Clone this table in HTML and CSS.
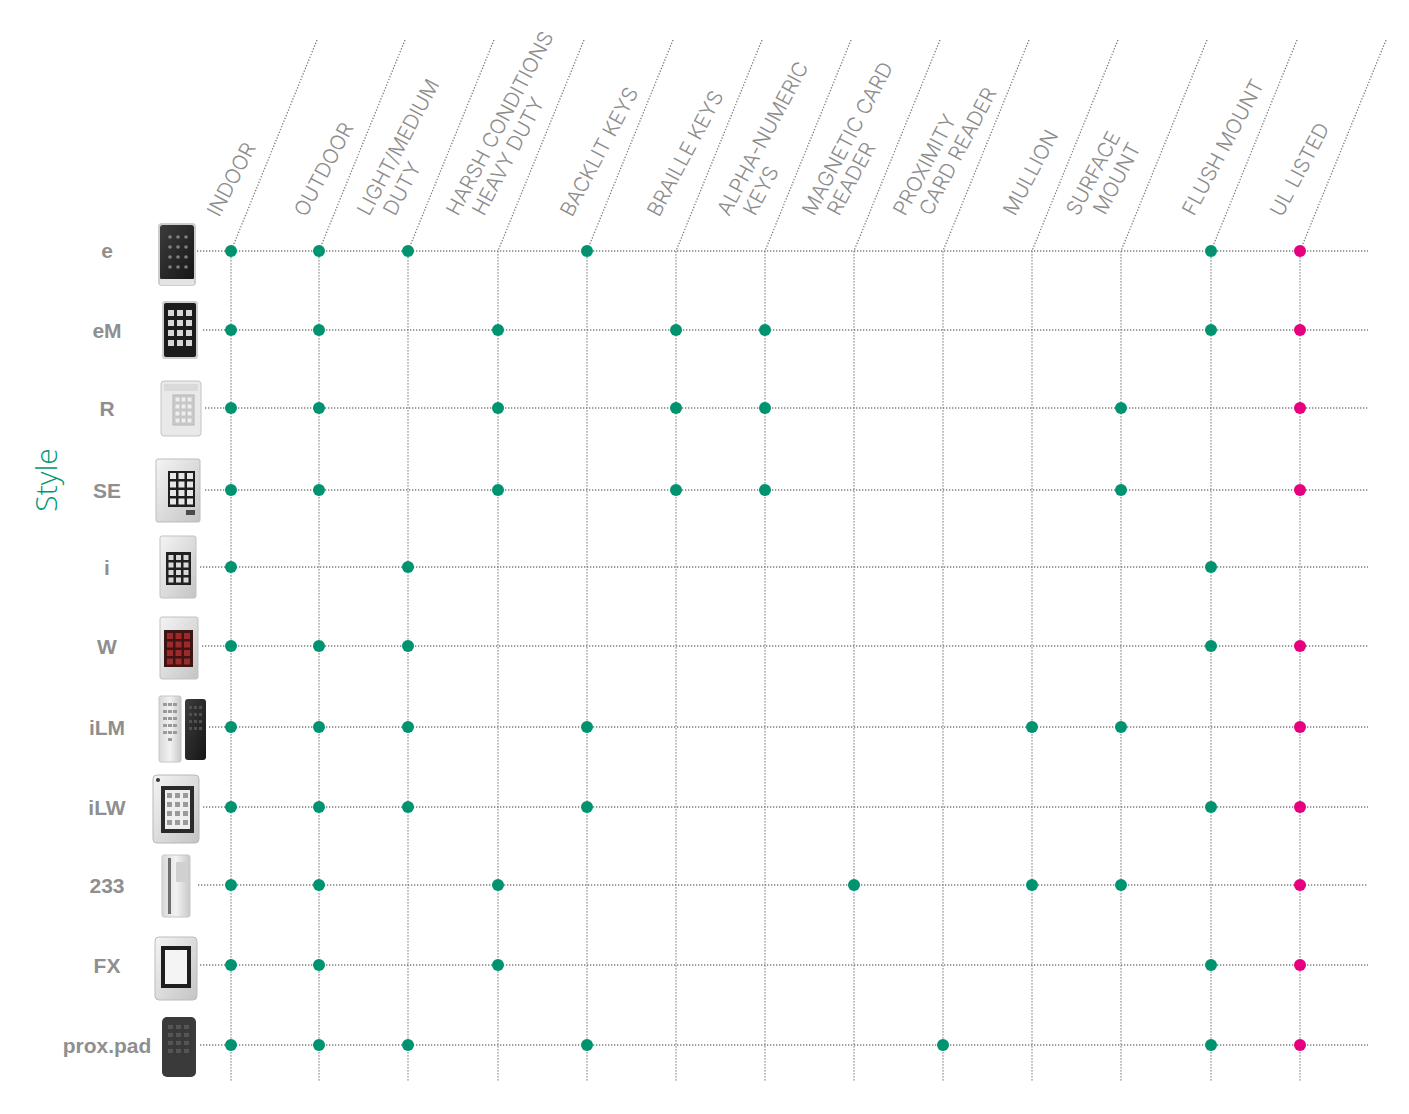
FILE: index.html
```html
<!DOCTYPE html>
<html lang="en">
<head>
<meta charset="utf-8">
<title>Keypad feature matrix</title>
<link rel="stylesheet" href="styles.css">
</head>
<body>
<main class="page">
<svg class="chart" width="1409" height="1114" viewBox="0 0 1409 1114" xmlns="http://www.w3.org/2000/svg">
  <defs>
    <linearGradient id="silver" x1="0" y1="0" x2="1" y2="1">
      <stop offset="0" stop-color="#f4f4f4"/>
      <stop offset="1" stop-color="#c4c4c4"/>
    </linearGradient>
    <linearGradient id="silverv" x1="0" y1="0" x2="1" y2="0">
      <stop offset="0" stop-color="#d8d8d8"/>
      <stop offset="0.5" stop-color="#f2f2f2"/>
      <stop offset="1" stop-color="#c8c8c8"/>
    </linearGradient>
    <linearGradient id="dark" x1="0" y1="0" x2="1" y2="1">
      <stop offset="0" stop-color="#3c3c3c"/>
      <stop offset="1" stop-color="#161616"/>
    </linearGradient>
  </defs>

  <!-- column guides: diagonal + vertical -->
  <g class="guides">
    <polyline points="317,40 231,251 231,1082"/>
    <polyline points="405,40 319,251 319,1082"/>
    <polyline points="494,40 408,251 408,1082"/>
    <polyline points="584,40 498,251 498,1082"/>
    <polyline points="673,40 587,251 587,1082"/>
    <polyline points="762,40 676,251 676,1082"/>
    <polyline points="851,40 765,251 765,1082"/>
    <polyline points="940,40 854,251 854,1082"/>
    <polyline points="1029,40 943,251 943,1082"/>
    <polyline points="1118,40 1032,251 1032,1082"/>
    <polyline points="1207,40 1121,251 1121,1082"/>
    <polyline points="1297,40 1211,251 1211,1082"/>
    <polyline points="1386,40 1300,251 1300,1082"/>
  </g>

  <!-- row guides -->
  <g class="guides">
    <line x1="197" y1="251" x2="1368" y2="251"/>
    <line x1="203" y1="330" x2="1368" y2="330"/>
    <line x1="205" y1="408" x2="1368" y2="408"/>
    <line x1="205" y1="490" x2="1368" y2="490"/>
    <line x1="200" y1="567" x2="1368" y2="567"/>
    <line x1="202" y1="646" x2="1368" y2="646"/>
    <line x1="209" y1="727" x2="1368" y2="727"/>
    <line x1="203" y1="807" x2="1368" y2="807"/>
    <line x1="198" y1="885" x2="1368" y2="885"/>
    <line x1="200" y1="965" x2="1368" y2="965"/>
    <line x1="200" y1="1045" x2="1368" y2="1045"/>
  </g>

  <!-- column headings -->
  <g class="heads">
    <text class="head" transform="translate(219,218) rotate(-62)">INDOOR</text>
    <text class="head" transform="translate(306,218) rotate(-62)">OUTDOOR</text>
    <text class="head" transform="translate(369,217) rotate(-62)">LIGHT/MEDIUM</text>
    <text class="head" transform="translate(395,217) rotate(-62)">DUTY</text>
    <text class="head" transform="translate(458,217) rotate(-62)">HARSH CONDITIONS</text>
    <text class="head" transform="translate(484,217) rotate(-62)">HEAVY DUTY</text>
    <text class="head" transform="translate(572,218) rotate(-62)">BACKLIT KEYS</text>
    <text class="head" transform="translate(659,218) rotate(-62)">BRAILLE KEYS</text>
    <text class="head" transform="translate(729,217) rotate(-62)">ALPHA-NUMERIC</text>
    <text class="head" transform="translate(755,217) rotate(-62)">KEYS</text>
    <text class="head" transform="translate(814,217) rotate(-62)">MAGNETIC CARD</text>
    <text class="head" transform="translate(839,217) rotate(-62)">READER</text>
    <text class="head" transform="translate(905,217) rotate(-62)">PROXIMITY</text>
    <text class="head" transform="translate(931,217) rotate(-62)">CARD READER</text>
    <text class="head" transform="translate(1015,217) rotate(-62)">MULLION</text>
    <text class="head" transform="translate(1078,217) rotate(-62)">SURFACE</text>
    <text class="head" transform="translate(1105,216) rotate(-62)">MOUNT</text>
    <text class="head" transform="translate(1194,217) rotate(-62)">FLUSH MOUNT</text>
    <text class="head" transform="translate(1282,218) rotate(-62)">UL LISTED</text>
  </g>

  <!-- axis title -->
  <text class="axis" transform="translate(57,480) rotate(-90)">Style</text>

  <!-- row labels -->
  <g class="rows">
    <text class="row-label" x="107" y="258">e</text>
    <text class="row-label" x="107" y="338">eM</text>
    <text class="row-label" x="107" y="416">R</text>
    <text class="row-label" x="107" y="498">SE</text>
    <text class="row-label" x="107" y="575">i</text>
    <text class="row-label" x="107" y="654">W</text>
    <text class="row-label" x="107" y="735">iLM</text>
    <text class="row-label" x="107" y="815">iLW</text>
    <text class="row-label" x="107" y="893">233</text>
    <text class="row-label" x="107" y="973">FX</text>
    <text class="row-label" x="107" y="1053">prox.pad</text>
  </g>

  <!-- product pictures -->
  <g class="products">
    <!-- e -->
    <g>
      <rect x="158" y="223" width="38" height="63" rx="4" fill="#cdcdcd"/>
      <rect x="160" y="225" width="34" height="55" rx="3" fill="url(#dark)"/>
      <rect x="160" y="279" width="34" height="6" rx="1" fill="#e4e4e4"/>
      <g fill="#808080">
        <circle cx="170" cy="237" r="1.8"/><circle cx="178" cy="237" r="1.8"/><circle cx="186" cy="237" r="1.8"/>
        <circle cx="170" cy="247" r="1.8"/><circle cx="178" cy="247" r="1.8"/><circle cx="186" cy="247" r="1.8"/>
        <circle cx="170" cy="257" r="1.8"/><circle cx="178" cy="257" r="1.8"/><circle cx="186" cy="257" r="1.8"/>
        <circle cx="170" cy="267" r="1.8"/><circle cx="178" cy="267" r="1.8"/><circle cx="186" cy="267" r="1.8"/>
      </g>
    </g>
    <!-- eM -->
    <g>
      <rect x="162" y="301" width="36" height="58" rx="3" fill="#cfcfcf"/>
      <rect x="164" y="303" width="32" height="54" rx="2" fill="#1c1c1c"/>
      <g fill="#d6d6d6">
        <rect x="168" y="310" width="6" height="6"/><rect x="177" y="310" width="6" height="6"/><rect x="186" y="310" width="6" height="6"/>
        <rect x="168" y="320" width="6" height="6"/><rect x="177" y="320" width="6" height="6"/><rect x="186" y="320" width="6" height="6"/>
        <rect x="168" y="330" width="6" height="6"/><rect x="177" y="330" width="6" height="6"/><rect x="186" y="330" width="6" height="6"/>
        <rect x="168" y="340" width="6" height="6"/><rect x="177" y="340" width="6" height="6"/><rect x="186" y="340" width="6" height="6"/>
      </g>
    </g>
    <!-- R -->
    <g>
      <rect x="161" y="381" width="40" height="55" rx="3" fill="#e9e9e9" stroke="#c4c4c4"/>
      <rect x="164" y="384" width="34" height="7" fill="#dadada"/>
      <rect x="173" y="395" width="21" height="30" fill="#d2d2d2" stroke="#b3b3b3"/>
      <g fill="#eeeeee" stroke="#b0b0b0" stroke-width="0.6">
        <rect x="175" y="397" width="5" height="5"/><rect x="181" y="397" width="5" height="5"/><rect x="187" y="397" width="5" height="5"/>
        <rect x="175" y="404" width="5" height="5"/><rect x="181" y="404" width="5" height="5"/><rect x="187" y="404" width="5" height="5"/>
        <rect x="175" y="411" width="5" height="5"/><rect x="181" y="411" width="5" height="5"/><rect x="187" y="411" width="5" height="5"/>
        <rect x="175" y="418" width="5" height="5"/><rect x="181" y="418" width="5" height="5"/><rect x="187" y="418" width="5" height="5"/>
      </g>
    </g>
    <!-- SE -->
    <g>
      <rect x="156" y="459" width="44" height="63" rx="2" fill="url(#silver)" stroke="#bdbdbd"/>
      <rect x="168" y="471" width="27" height="36" fill="#1e1e1e"/>
      <g fill="#e6e6e6">
        <rect x="170" y="473" width="6" height="6"/><rect x="178.5" y="473" width="6" height="6"/><rect x="187" y="473" width="6" height="6"/>
        <rect x="170" y="481.5" width="6" height="6"/><rect x="178.5" y="481.5" width="6" height="6"/><rect x="187" y="481.5" width="6" height="6"/>
        <rect x="170" y="490" width="6" height="6"/><rect x="178.5" y="490" width="6" height="6"/><rect x="187" y="490" width="6" height="6"/>
        <rect x="170" y="498.5" width="6" height="6"/><rect x="178.5" y="498.5" width="6" height="6"/><rect x="187" y="498.5" width="6" height="6"/>
      </g>
      <rect x="186" y="510" width="9" height="5" fill="#4a4a4a"/>
    </g>
    <!-- i -->
    <g>
      <rect x="160" y="536" width="36" height="62" rx="2" fill="url(#silver)" stroke="#c2c2c2"/>
      <rect x="166" y="552" width="25" height="33" fill="#202020"/>
      <g fill="#d9d9d9">
        <rect x="168.5" y="555" width="5" height="5"/><rect x="176" y="555" width="5" height="5"/><rect x="183.5" y="555" width="5" height="5"/>
        <rect x="168.5" y="562.5" width="5" height="5"/><rect x="176" y="562.5" width="5" height="5"/><rect x="183.5" y="562.5" width="5" height="5"/>
        <rect x="168.5" y="570" width="5" height="5"/><rect x="176" y="570" width="5" height="5"/><rect x="183.5" y="570" width="5" height="5"/>
        <rect x="168.5" y="577.5" width="5" height="5"/><rect x="176" y="577.5" width="5" height="5"/><rect x="183.5" y="577.5" width="5" height="5"/>
      </g>
    </g>
    <!-- W -->
    <g>
      <rect x="160" y="617" width="38" height="62" rx="2" fill="url(#silver)" stroke="#c2c2c2"/>
      <rect x="164" y="630" width="29" height="37" fill="#3e1414"/>
      <g fill="#9c2a2a">
        <rect x="167" y="633" width="6" height="6"/><rect x="175.5" y="633" width="6" height="6"/><rect x="184" y="633" width="6" height="6"/>
        <rect x="167" y="641.5" width="6" height="6"/><rect x="175.5" y="641.5" width="6" height="6"/><rect x="184" y="641.5" width="6" height="6"/>
        <rect x="167" y="650" width="6" height="6"/><rect x="175.5" y="650" width="6" height="6"/><rect x="184" y="650" width="6" height="6"/>
        <rect x="167" y="658.5" width="6" height="6"/><rect x="175.5" y="658.5" width="6" height="6"/><rect x="184" y="658.5" width="6" height="6"/>
      </g>
    </g>
    <!-- iLM -->
    <g>
      <rect x="159" y="696" width="22" height="66" rx="2" fill="url(#silverv)" stroke="#c6c6c6"/>
      <g fill="#9a9a9a">
        <rect x="163" y="703" width="4" height="3"/><rect x="168" y="703" width="4" height="3"/><rect x="173" y="703" width="4" height="3"/>
        <rect x="163" y="710" width="4" height="3"/><rect x="168" y="710" width="4" height="3"/><rect x="173" y="710" width="4" height="3"/>
        <rect x="163" y="717" width="4" height="3"/><rect x="168" y="717" width="4" height="3"/><rect x="173" y="717" width="4" height="3"/>
        <rect x="163" y="724" width="4" height="3"/><rect x="168" y="724" width="4" height="3"/><rect x="173" y="724" width="4" height="3"/>
        <rect x="163" y="731" width="4" height="3"/><rect x="168" y="731" width="4" height="3"/><rect x="173" y="731" width="4" height="3"/>
        <rect x="168" y="738" width="4" height="3"/>
      </g>
      <rect x="185" y="699" width="21" height="61" rx="3" fill="url(#dark)"/>
      <g fill="#505050">
        <rect x="189" y="706" width="3" height="3"/><rect x="194" y="706" width="3" height="3"/><rect x="199" y="706" width="3" height="3"/>
        <rect x="189" y="713" width="3" height="3"/><rect x="194" y="713" width="3" height="3"/><rect x="199" y="713" width="3" height="3"/>
        <rect x="189" y="720" width="3" height="3"/><rect x="194" y="720" width="3" height="3"/><rect x="199" y="720" width="3" height="3"/>
        <rect x="189" y="727" width="3" height="3"/><rect x="194" y="727" width="3" height="3"/><rect x="199" y="727" width="3" height="3"/>
      </g>
    </g>
    <!-- iLW -->
    <g>
      <rect x="153" y="775" width="46" height="68" rx="4" fill="url(#silver)" stroke="#b8b8b8"/>
      <circle cx="158" cy="780" r="2" fill="#333"/>
      <rect x="161" y="786" width="33" height="47" fill="#2a2a2a"/>
      <rect x="165" y="790" width="25" height="39" fill="#eeeeee"/>
      <g fill="#9a9a9a">
        <rect x="167" y="793" width="5" height="5"/><rect x="175" y="793" width="5" height="5"/><rect x="183" y="793" width="5" height="5"/>
        <rect x="167" y="802" width="5" height="5"/><rect x="175" y="802" width="5" height="5"/><rect x="183" y="802" width="5" height="5"/>
        <rect x="167" y="811" width="5" height="5"/><rect x="175" y="811" width="5" height="5"/><rect x="183" y="811" width="5" height="5"/>
        <rect x="167" y="820" width="5" height="5"/><rect x="175" y="820" width="5" height="5"/><rect x="183" y="820" width="5" height="5"/>
      </g>
    </g>
    <!-- 233 -->
    <g>
      <rect x="162" y="855" width="28" height="62" rx="2" fill="url(#silverv)" stroke="#c8c8c8"/>
      <rect x="168" y="858" width="3" height="56" fill="#6e6e6e"/>
      <rect x="176" y="862" width="10" height="20" fill="#d0d0d0"/>
    </g>
    <!-- FX -->
    <g>
      <rect x="155" y="937" width="42" height="63" rx="4" fill="url(#silver)" stroke="#bcbcbc"/>
      <rect x="161" y="946" width="30" height="42" fill="#1e1e1e"/>
      <rect x="165" y="950" width="22" height="34" fill="#f4f4f4"/>
    </g>
    <!-- prox.pad -->
    <g>
      <rect x="162" y="1017" width="34" height="60" rx="5" fill="#3a3a3a"/>
      <g fill="#555555">
        <rect x="168" y="1025" width="5" height="4"/><rect x="176" y="1025" width="5" height="4"/><rect x="184" y="1025" width="5" height="4"/>
        <rect x="168" y="1033" width="5" height="4"/><rect x="176" y="1033" width="5" height="4"/><rect x="184" y="1033" width="5" height="4"/>
        <rect x="168" y="1041" width="5" height="4"/><rect x="176" y="1041" width="5" height="4"/><rect x="184" y="1041" width="5" height="4"/>
        <rect x="168" y="1049" width="5" height="4"/><rect x="176" y="1049" width="5" height="4"/><rect x="184" y="1049" width="5" height="4"/>
      </g>
    </g>
  </g>

  <!-- feature marks -->
  <g class="marks">
    <!-- e -->
    <circle class="dot" cx="231" cy="251" r="6"/><circle class="dot" cx="319" cy="251" r="6"/><circle class="dot" cx="408" cy="251" r="6"/><circle class="dot" cx="587" cy="251" r="6"/><circle class="dot" cx="1211" cy="251" r="6"/><circle class="dot ul" cx="1300" cy="251" r="6"/>
    <!-- eM -->
    <circle class="dot" cx="231" cy="330" r="6"/><circle class="dot" cx="319" cy="330" r="6"/><circle class="dot" cx="498" cy="330" r="6"/><circle class="dot" cx="676" cy="330" r="6"/><circle class="dot" cx="765" cy="330" r="6"/><circle class="dot" cx="1211" cy="330" r="6"/><circle class="dot ul" cx="1300" cy="330" r="6"/>
    <!-- R -->
    <circle class="dot" cx="231" cy="408" r="6"/><circle class="dot" cx="319" cy="408" r="6"/><circle class="dot" cx="498" cy="408" r="6"/><circle class="dot" cx="676" cy="408" r="6"/><circle class="dot" cx="765" cy="408" r="6"/><circle class="dot" cx="1121" cy="408" r="6"/><circle class="dot ul" cx="1300" cy="408" r="6"/>
    <!-- SE -->
    <circle class="dot" cx="231" cy="490" r="6"/><circle class="dot" cx="319" cy="490" r="6"/><circle class="dot" cx="498" cy="490" r="6"/><circle class="dot" cx="676" cy="490" r="6"/><circle class="dot" cx="765" cy="490" r="6"/><circle class="dot" cx="1121" cy="490" r="6"/><circle class="dot ul" cx="1300" cy="490" r="6"/>
    <!-- i -->
    <circle class="dot" cx="231" cy="567" r="6"/><circle class="dot" cx="408" cy="567" r="6"/><circle class="dot" cx="1211" cy="567" r="6"/>
    <!-- W -->
    <circle class="dot" cx="231" cy="646" r="6"/><circle class="dot" cx="319" cy="646" r="6"/><circle class="dot" cx="408" cy="646" r="6"/><circle class="dot" cx="1211" cy="646" r="6"/><circle class="dot ul" cx="1300" cy="646" r="6"/>
    <!-- iLM -->
    <circle class="dot" cx="231" cy="727" r="6"/><circle class="dot" cx="319" cy="727" r="6"/><circle class="dot" cx="408" cy="727" r="6"/><circle class="dot" cx="587" cy="727" r="6"/><circle class="dot" cx="1032" cy="727" r="6"/><circle class="dot" cx="1121" cy="727" r="6"/><circle class="dot ul" cx="1300" cy="727" r="6"/>
    <!-- iLW -->
    <circle class="dot" cx="231" cy="807" r="6"/><circle class="dot" cx="319" cy="807" r="6"/><circle class="dot" cx="408" cy="807" r="6"/><circle class="dot" cx="587" cy="807" r="6"/><circle class="dot" cx="1211" cy="807" r="6"/><circle class="dot ul" cx="1300" cy="807" r="6"/>
    <!-- 233 -->
    <circle class="dot" cx="231" cy="885" r="6"/><circle class="dot" cx="319" cy="885" r="6"/><circle class="dot" cx="498" cy="885" r="6"/><circle class="dot" cx="854" cy="885" r="6"/><circle class="dot" cx="1032" cy="885" r="6"/><circle class="dot" cx="1121" cy="885" r="6"/><circle class="dot ul" cx="1300" cy="885" r="6"/>
    <!-- FX -->
    <circle class="dot" cx="231" cy="965" r="6"/><circle class="dot" cx="319" cy="965" r="6"/><circle class="dot" cx="498" cy="965" r="6"/><circle class="dot" cx="1211" cy="965" r="6"/><circle class="dot ul" cx="1300" cy="965" r="6"/>
    <!-- prox.pad -->
    <circle class="dot" cx="231" cy="1045" r="6"/><circle class="dot" cx="319" cy="1045" r="6"/><circle class="dot" cx="408" cy="1045" r="6"/><circle class="dot" cx="587" cy="1045" r="6"/><circle class="dot" cx="943" cy="1045" r="6"/><circle class="dot" cx="1211" cy="1045" r="6"/><circle class="dot ul" cx="1300" cy="1045" r="6"/>
  </g>
</svg>
</main>
</body>
</html>
```

FILE: styles.css
```css
html, body {
  margin: 0;
  padding: 0;
  background: #ffffff;
}

.page {
  width: 1409px;
  height: 1114px;
  overflow: hidden;
}

.chart {
  display: block;
}

.guides polyline,
.guides line {
  fill: none;
  stroke: #7c7c7c;
  stroke-width: 1.3;
  stroke-dasharray: 1.3 1.7;
}

.head {
  font-family: Inter, "Liberation Sans", sans-serif;
  font-weight: 300;
  font-size: 20.5px;
  fill: #8c8c8c;
}

.axis {
  font-family: "Open Sans", "Noto Sans", sans-serif;
  font-weight: 300;
  font-size: 30px;
  fill: #00966f;
  text-anchor: middle;
}

.row-label {
  font-family: "Liberation Sans", Arial, sans-serif;
  font-weight: 700;
  font-size: 21px;
  fill: #8f8f8f;
  text-anchor: middle;
}

.dot {
  fill: #00936f;
}

.dot.ul {
  fill: #e6007e;
}
```
